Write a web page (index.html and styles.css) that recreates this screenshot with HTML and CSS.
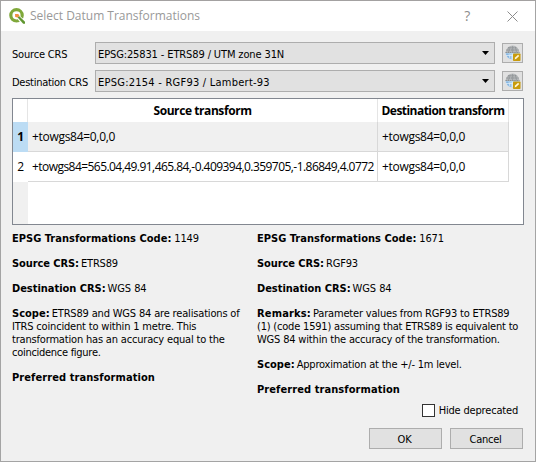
FILE: index.html
```html
<!DOCTYPE html>
<html lang="en">
<head>
<meta charset="utf-8">
<title>Select Datum Transformations</title>
<link rel="stylesheet" href="styles.css">
</head>
<body>
<svg width="0" height="0" class="defs">
  <symbol id="globe" viewBox="0 0 16 16">
    <path d="M.5 7.500h14a7 7 0 0 1-14 0z" fill="#b3d4f1"/>
    <path d="M1 8.500h4l1 5.500C3 13 1.500 11.500 1 8.500z" fill="#86b5e0"/>
    <path d="M.5 8a7 7.500 0 0 1 14 0z" fill="#b4b7b9"/>
    <path d="M.5 7.500h14M1.500 5h12M3 2.800h9" fill="none" stroke="#7f8487" stroke-width=".8" stroke-dasharray="1.400 .8"/>
    <path d="M7.500 1v6M4.500 2L3.500 7M10.500 2l1 5" fill="none" stroke="#8c9194" stroke-width=".6"/>
    <path d="M4 8.500l.8 5M7.500 8.500V14M1 10.500h7" fill="none" stroke="#e3f0fa" stroke-width=".7"/>
    <rect x="8" y="8.500" width="7.500" height="7.500" rx=".8" fill="#c99b0c"/>
    <path d="M9.600 14.500l.5-2 3-2.700 1.200 1.100-3 2.900z" fill="#fff6d8"/>
  </symbol>
</svg>
<div class="dialog">
  <header class="titlebar">
    <svg class="logo" width="16" height="16" viewBox="0 0 16 16">
      <circle cx="7.500" cy="7.300" r="5.700" fill="none" stroke="#7fa83a" stroke-width="3.200"/>
      <path d="M8.500 11l2.800-2.800 4.700 4.300V16h-3.500z" fill="#fff"/>
      <path d="M8.500 9.300l1.500-1.300 6 5.700v2h-1.800z" fill="#5f9630"/>
      <path d="M6 6h3l1.500 1.300-1.700 2.200L6.200 9z" fill="#f09042"/>
    </svg>
    <h1>Select Datum Transformations</h1>
    <span class="help">?</span>
    <svg class="close" width="11" height="11" viewBox="0 0 11 11"><path d="M.5.5l10 10M10.500.5l-10 10" stroke="#8c8c8c" fill="none"/></svg>
  </header>
  <main>
    <div class="crs">
      <label>Source CRS</label>
      <div class="combo"><span class="combo-source">EPSG:25831 - ETRS89 / UTM zone 31N</span><i></i></div>
      <button class="pick"><svg width="16" height="16"><use href="#globe"/></svg></button>
      <label class="label-dest">Destination CRS</label>
      <div class="combo"><span class="combo-dest">EPSG:2154 - RGF93 / Lambert-93</span><i></i></div>
      <button class="pick"><svg width="16" height="16"><use href="#globe"/></svg></button>
    </div>
    <div class="table">
      <div class="row head"><span class="num"></span><b class="src">Source transform</b><b class="dst">Destination transform</b></div>
      <div class="row current"><span class="num">1</span><span class="src">+towgs84=0,0,0</span><span class="dst">+towgs84=0,0,0</span></div>
      <div class="row"><span class="num">2</span><span class="src long">+towgs84=565.04,49.91,465.84,-0.409394,0.359705,-1.86849,4.0772</span><span class="dst">+towgs84=0,0,0</span></div>
      <div class="filler"></div>
    </div>
    <div class="details">
      <section>
        <p><b>EPSG Transformations Code:</b> 1149</p>
        <p><b class="b-src">Source CRS:</b><span class="near">ETRS89</span></p>
        <p><b class="b-dst">Destination CRS:</b><span class="near n-wgs">WGS 84</span></p>
        <p><b>Scope:</b><span class="near n-scope">ETRS89 and WGS 84 are realisations of</span><br>ITRS coincident to within 1 metre. This<br>transformation has an accuracy equal to the<br><span class="tight">coincidence figure.</span></p>
        <p><b class="b-pref">Preferred transformation</b></p>
      </section>
      <section>
        <p><b>EPSG Transformations Code:</b> 1671</p>
        <p><b class="b-src">Source CRS:</b><span class="near">RGF93</span></p>
        <p><b class="b-dst">Destination CRS:</b><span class="near n-wgs">WGS 84</span></p>
        <p><b class="b-rem">Remarks:</b><span class="near">Parameter values from RGF93 to ETRS89</span><br><span class="snug">(1) (code 1591) assuming that ETRS89 is equivalent to</span><br>WGS 84 within the accuracy of the transformation.</p>
        <p><b>Scope:</b><span class="near snug">Approximation at the +/- 1m level.</span></p>
        <p><b class="b-pref">Preferred transformation</b></p>
      </section>
    </div>
    <label class="deprecated"><span class="box"></span>Hide deprecated</label>
    <div class="buttons"><button>OK</button><button class="cancel">Cancel</button></div>
  </main>
</div>
</body>
</html>
```
FILE: styles.css
```css
* { box-sizing: border-box; }
body {
  margin: 0;
  width: 536px;
  height: 462px;
  overflow: hidden;
  padding: 1px 0 0;
  background: #a3a1a1;
  font: 11px/13px "DejaVu Sans Condensed", "DejaVu Sans", sans-serif;
  font-stretch: condensed;
  letter-spacing: -0.18px;
  color: #000;
  white-space: nowrap;
}
.defs { position: absolute; }
.dialog {
  width: 536px;
  height: 461px;
  background: #f0f0f0;
  border: solid #a4a4a4;
  border-width: 0 1px 1px;
}
.titlebar {
  display: flex;
  align-items: center;
  height: 30px;
  padding: 0 17px 0 8px;
  background: #fff;
}
h1 {
  flex: 1;
  margin: 0 0 0 5px;
  font: 12px/16px "Open Sans", sans-serif;
  letter-spacing: -0.01px;
  color: #999;
}
.help { margin-right: 37px; font: 14px/16px "Open Sans", sans-serif; color: #8c8c8c; }
main { padding: 11px 11px 0 11px; }
.crs {
  display: grid;
  grid-template-columns: 76px 400px 22px;
  grid-template-rows: 22px 22px;
  column-gap: 7px;
  row-gap: 6px;
  align-items: center;
}
.crs label { padding-top: 2px; }
.label-dest { letter-spacing: -0.27px; }
.combo {
  display: flex;
  align-items: center;
  justify-content: space-between;
  height: 22px;
  padding: 2px 5px 0 2px;
  background: #e1e1e1;
  border: 1px solid #adadad;
}
.combo-source { letter-spacing: -0.12px; }
.combo-dest { letter-spacing: 0.24px; }
.combo i { width: 7px; height: 4px; margin-bottom: 2px; background: #000; clip-path: polygon(0 0, 100% 0, 50% 100%); }
button {
  padding: 0;
  font: inherit;
  letter-spacing: inherit;
  color: inherit;
  background: #e1e1e1;
  border: 1px solid #adadad;
  border-radius: 0;
}
.pick {
  display: grid;
  place-items: center;
  width: 21px;
  height: 20px;
}
.table {
  display: flex;
  flex-direction: column;
  height: 127px;
  width: 512px;
  margin-top: 6px;
  background: #fff;
  border: 1px solid #828790;
  font: 12px/16px "Open Sans", sans-serif;
  letter-spacing: -0.3px;
}
.row { display: grid; grid-template-columns: 15px 350px 131px; height: 30px; }
.row > * { padding: 7px 0 0 4px; border: 0 solid #d8d8d8; border-width: 0 1px 1px 0; }
.row > .num { padding: 7px 0 0; text-align: center; border-width: 0; }
.row:last-of-type .num { border-right-width: 1px; }
.head { height: 23px; }
.head > * { padding: 4px 0 0; text-align: center; border-bottom: 0; border-color: #e5e5e5; }
.head > .num { border-right-width: 1px; }
.head .src { letter-spacing: -0.42px; }
.head .dst { letter-spacing: -0.54px; }
.current > * { background: #f0f0f0; }
.current > .num { background: #bcdcf4; font-weight: 700; }
.long { letter-spacing: -0.55px; }
.filler { flex: 1; width: 15px; background: #f0f0f0; }
.details { display: grid; grid-template-columns: 245px 1fr; height: 173px; padding-top: 7px; }
.details p { margin: 0 0 12px; }
.details b { letter-spacing: 0.02px; }
.details .b-src { letter-spacing: -0.08px; }
.details .b-dst { letter-spacing: -0.03px; }
.details .b-pref { letter-spacing: 0.08px; }
.details .b-rem { letter-spacing: 0.17px; }
.near { margin-left: 2px; }
.n-wgs { letter-spacing: -0.08px; }
.n-scope { letter-spacing: -0.17px; }
.snug { letter-spacing: -0.2px; }
.tight { letter-spacing: -0.28px; }
.deprecated { display: flex; justify-content: flex-end; gap: 4px; height: 13px; margin: 6px 6px 0 0; }
.box { width: 13px; height: 13px; background: #fff; border: 1px solid #333; }
.buttons { display: flex; justify-content: flex-end; gap: 8px; margin: 11px 1px 0 0; }
.buttons button { width: 73px; height: 21px; padding-right: 2px; padding-top: 1px; }
.cancel { letter-spacing: -0.25px; }
```
